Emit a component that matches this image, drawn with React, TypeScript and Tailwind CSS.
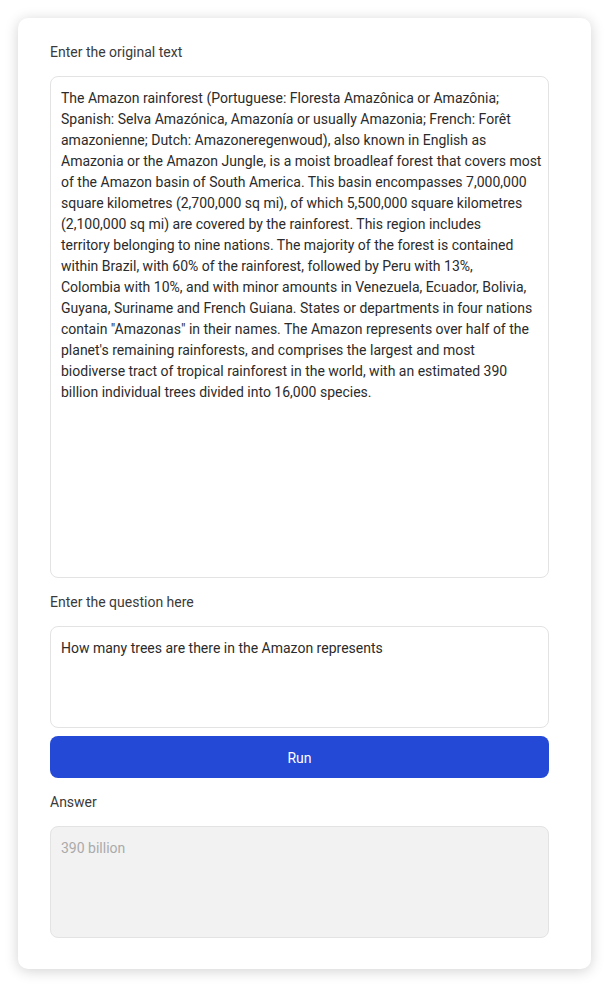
import React from "react";

const lines = [
  "The Amazon rainforest (Portuguese: Floresta Amazônica or Amazônia;",
  "Spanish: Selva Amazónica, Amazonía or usually Amazonia; French: Forêt",
  "amazonienne; Dutch: Amazoneregenwoud), also known in English as",
  "Amazonia or the Amazon Jungle, is a moist broadleaf forest that covers most",
  "of the Amazon basin of South America. This basin encompasses 7,000,000",
  "square kilometres (2,700,000 sq mi), of which 5,500,000 square kilometres",
  "(2,100,000 sq mi) are covered by the rainforest. This region includes",
  "territory belonging to nine nations. The majority of the forest is contained",
  "within Brazil, with 60% of the rainforest, followed by Peru with 13%,",
  "Colombia with 10%, and with minor amounts in Venezuela, Ecuador, Bolivia,",
  "Guyana, Suriname and French Guiana. States or departments in four nations",
  'contain "Amazonas" in their names. The Amazon represents over half of the',
  "planet's remaining rainforests, and comprises the largest and most",
  "biodiverse tract of tropical rainforest in the world, with an estimated 390",
  "billion individual trees divided into 16,000 species.",
];

export default function App() {
  return (
    <div className="min-h-[988px] bg-white pt-[18px] px-[18px] font-['Roboto',sans-serif]">
      <div className="w-[573px] rounded-[10px] bg-white shadow-[0_2px_14px_rgba(0,0,0,0.18)] pl-[32px] pr-[42px] pt-[25px] pb-[31px]">
        <label className="block text-[14px] leading-[18px] text-[#3a3a3a] mb-[15px]">Enter the original text</label>
        <textarea
          readOnly
          value={lines.join("\n")}
          className="block w-full h-[502px] resize-none rounded-[8px] border border-[#e3e3e3] px-[10px] pt-[11px] pb-[10px] text-[14px] leading-[21px] text-[#2b2b2b] outline-none whitespace-pre overflow-hidden"
        />
        <label className="block mt-[15px] text-[14px] leading-[18px] text-[#3a3a3a] mb-[15px]">Enter the question here</label>
        <textarea
          readOnly
          value="How many trees are there in the Amazon represents"
          className="block w-full h-[102px] resize-none rounded-[8px] border border-[#e3e3e3] px-[10px] pt-[11px] pb-[9px] text-[14px] leading-[21px] text-[#2b2b2b] outline-none overflow-hidden"
        />
        <button className="mt-[8px] block w-full h-[42px] rounded-[8px] bg-[#2449d6] pt-[2px] text-[14px] text-white">Run</button>
        <label className="block mt-[15px] text-[14px] leading-[18px] text-[#3a3a3a] mb-[15px]">Answer</label>
        <textarea
          readOnly
          value="390 billion"
          className="block w-full h-[112px] resize-none rounded-[8px] border border-[#e3e3e3] bg-[#f2f2f2] px-[10px] pt-[11px] pb-[9px] text-[14px] leading-[21px] text-[#aaaaaa] outline-none overflow-hidden"
        />
      </div>
    </div>
  );
}
